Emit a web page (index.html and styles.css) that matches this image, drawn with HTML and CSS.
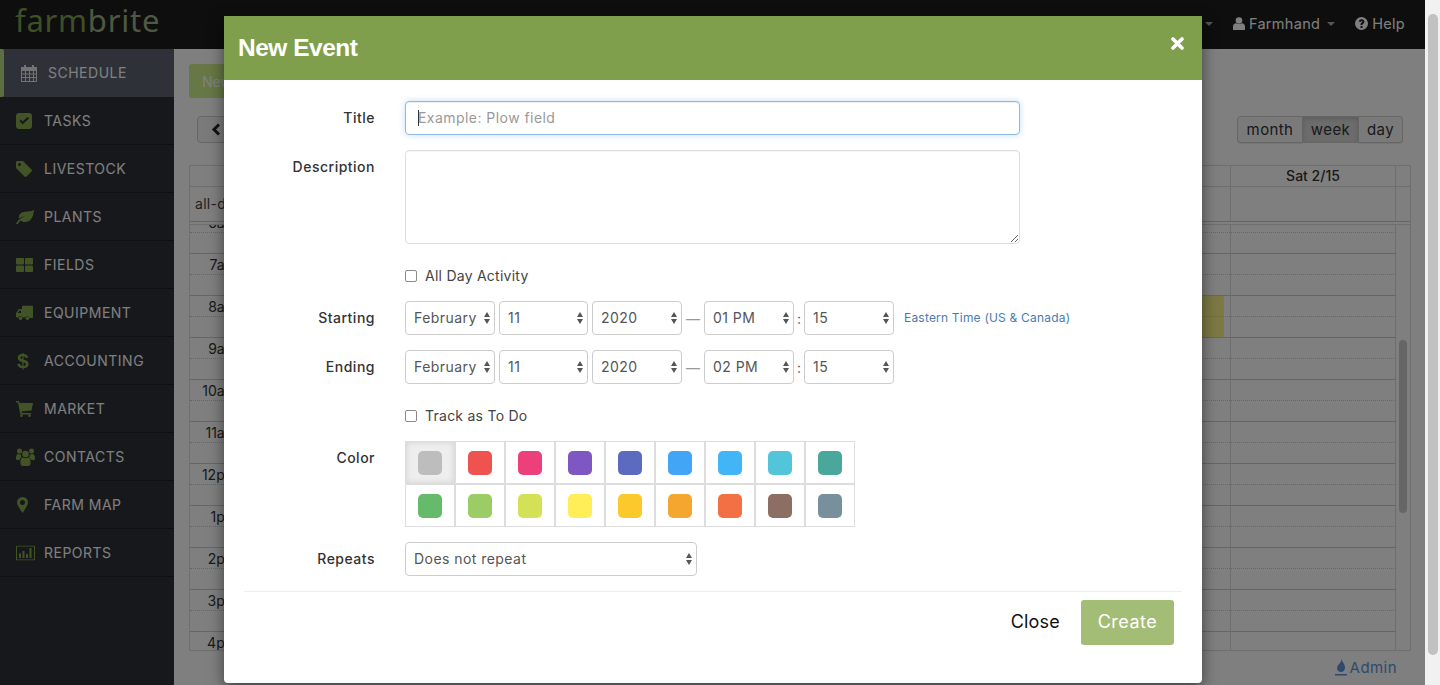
FILE: index.html
```html
<!DOCTYPE html>
<html lang="en">
<head>
<meta charset="utf-8">
<title>New Event - Farmbrite</title>
<link rel="stylesheet" href="styles.css">
</head>
<body>
<div class="app">
  <div class="page">
    <header class="topbar">
      <div class="logo"><span class="logo-a">farm</span><span class="logo-b">brite</span></div>
      <nav class="topnav">
        <span class="caret caret-lone"></span>
        <a class="topitem"><svg class="ti" width="12" height="13" viewBox="0 0 12 13"><circle cx="6" cy="3.5" r="3.3"/><path d="M0 13V9.5C0 7.6 1.4 6.4 3 6.2 4 7.2 8 7.2 9 6.2 10.6 6.4 12 7.6 12 9.5V13Z"/></svg>Farmhand<span class="caret"></span></a>
        <a class="topitem"><svg class="ti" width="13" height="13" viewBox="0 0 13 13"><path fill-rule="evenodd" d="M6.500 0a6.500 6.500 0 1 0 0 13 6.500 6.500 0 0 0 0-13ZM5.500 9h2v2h-2ZM3.800 4.600C4 3.200 5.100 2.300 6.600 2.300c1.600 0 2.800 1 2.800 2.400 0 1.100-.7 1.600-1.300 2-.4.300-.6.500-.6.900v.3h-2v-.5c0-1 .6-1.500 1.100-1.900.4-.3.700-.5.700-.8 0-.4-.3-.7-.7-.7-.5 0-.8.300-.9.900Z"/></svg>Help</a>
      </nav>
    </header>
    <div class="body-row">
      <aside class="sidebar">
        <a class="nav-item active"><svg class="nicon cal-icon" width="18" height="18" viewBox="0 0 18 18"><path fill-rule="evenodd" d="M1 3h3V1h2v2h6V1h2v2h3v15H1ZM2 7v2.500h3V7Zm4 0v2.500h3V7Zm4 0v2.500h3V7Zm4 0v2.500h2V7ZM2 10.500V13h3v-2.500Zm4 0V13h3v-2.500Zm4 0V13h3v-2.500Zm4 0V13h2v-2.500ZM2 14v3h3v-3Zm4 0v3h3v-3Zm4 0v3h3v-3Zm4 0v3h2v-3Z"/></svg>SCHEDULE</a>
        <a class="nav-item"><svg class="nicon" width="16" height="16" viewBox="0 0 16 16"><path fill-rule="evenodd" d="M3 0h10a3 3 0 0 1 3 3v10a3 3 0 0 1-3 3H3a3 3 0 0 1-3-3V3a3 3 0 0 1 3-3Zm.5 8L6.500 11.500 13 5.500 11.500 4 6.500 8.600 5 6.500Z"/></svg>TASKS</a>
        <a class="nav-item"><svg class="nicon" width="16" height="16" viewBox="0 0 16 16"><path fill-rule="evenodd" d="M0 1.500C0 .6.600 0 1.500 0H7l8.500 8.500c.6.600.6 1.400 0 2L10.500 15.500c-.6.600-1.400.6-2 0L0 7ZM3.500 2a1.500 1.500 0 1 0 0 3 1.500 1.500 0 0 0 0-3Z"/></svg>LIVESTOCK</a>
        <a class="nav-item"><svg class="nicon" width="18" height="15" viewBox="0 0 18 15"><path d="M18 0C17.500 6 16 12 9.500 12.500 7.500 12.700 5.500 12 4.500 11 3.500 12 2.500 13.500 1.500 15L0 14.200C1.500 11.500 4 8.500 9.500 6.500 6.500 7 4 8.200 3 9 2 5 5.500 2.500 9 2.300 13 2 16.500 2 18 0Z"/></svg>PLANTS</a>
        <a class="nav-item"><svg class="nicon" width="17" height="14" viewBox="0 0 17 14"><rect width="8" height="6.500" rx="1"/><rect x="9" width="8" height="6.500" rx="1"/><rect y="7.500" width="8" height="6.500" rx="1"/><rect x="9" y="7.500" width="8" height="6.500" rx="1"/></svg>FIELDS</a>
        <a class="nav-item"><svg class="nicon" width="17" height="15" viewBox="0 0 17 15"><path fill-rule="evenodd" d="M7 0h9a1 1 0 0 1 1 1v10.500a1 1 0 0 1-1 1h-2.200a2.500 2.500 0 0 0-4.600-.5H6.800a2.500 2.500 0 0 0-4.600 0H1a1 1 0 0 1-1-1V7.500L3 3.500h3V1a1 1 0 0 1 1-1ZM3.700 5 1.500 7.500H5V5Z"/><circle cx="4.500" cy="12.800" r="1.800"/><circle cx="11.500" cy="12.800" r="1.800"/></svg>EQUIPMENT</a>
        <a class="nav-item"><span class="nicon dollar">$</span>ACCOUNTING</a>
        <a class="nav-item"><svg class="nicon" width="17" height="16" viewBox="0 0 17 16"><path d="M0 0h3l.5 2H17l-1.500 7.500-10 1 .3 1.500H15v1.500H4.300L2 1.500H0Z"/><circle cx="5.500" cy="14.700" r="1.300"/><circle cx="13.500" cy="14.700" r="1.300"/></svg>MARKET</a>
        <a class="nav-item"><svg class="nicon" width="19" height="18" viewBox="0 0 19 18"><circle cx="9.500" cy="6" r="3.300"/><circle cx="3.500" cy="3" r="2.500"/><circle cx="15.500" cy="3" r="2.500"/><path d="M0 10c0-2.500 1-4 2.500-4.200.5.500 1.500 1 2.500.8-.3 1-.1 2 .5 2.800-1 .5-1.800 1.400-2.200 2.600H1C.4 12 0 11.200 0 10ZM19 10c0 1.200-.4 2-1 2h-2.800c-.4-1.200-1.200-2.100-2.200-2.600.6-.8.800-1.800.5-2.800 1 .2 2-.3 2.500-.8C18 6 19 7.500 19 10ZM4.500 15.500V13c0-2 1.200-3.300 2.700-3.500 1.200 1 3.400 1 4.600 0 1.500.2 2.700 1.500 2.700 3.500v2.500c0 1.500-1 2.500-2.500 2.500H7c-1.500 0-2.500-1-2.500-2.500Z"/></svg>CONTACTS</a>
        <a class="nav-item"><svg class="nicon marker" width="11" height="16" viewBox="0 0 11 16"><path fill-rule="evenodd" d="M5.500 0A5.500 5.500 0 0 1 11 5.500C11 8 7.500 13 5.500 16 3.500 13 0 8 0 5.500A5.500 5.500 0 0 1 5.500 0Zm0 3a2.500 2.500 0 1 0 0 5 2.500 2.500 0 0 0 0-5Z"/></svg>FARM MAP</a>
        <a class="nav-item"><svg class="nicon" width="19" height="15" viewBox="0 0 19 15"><path fill-rule="evenodd" d="M1 0h17a1 1 0 0 1 1 1v13a1 1 0 0 1-1 1H1a1 1 0 0 1-1-1V1a1 1 0 0 1 1-1Zm0 1v13h17V1ZM3 8h2v4.500H3Zm3.500-2.500h2v7h-2Zm3.500 3h2v4h-2Zm3.500-6h2v10h-2Z"/></svg>REPORTS</a>
      </aside>
      <main class="content">
        <button class="new-btn">New Event</button>
        <div class="toolbar">
          <button class="prev-btn"><svg width="10" height="13" viewBox="0 0 10 13"><path d="M8 1.500 3 6.500l5 5" fill="none" stroke="#222" stroke-width="3"/></svg></button>
          <div class="views"><button class="view v-month">month</button><button class="view v-week on">week</button><button class="view v-day">day</button></div>
        </div>
        <section class="cal">
          <div class="cal-row cal-head"><div class="cal-cell"></div><div class="cal-cell sat">Sat 2/15</div><div class="cal-gut"></div></div>
          <div class="cal-row cal-allday"><div class="cal-cell allday-label">all-day</div><div class="cal-cell"></div><div class="cal-gut"></div></div>
          <div class="cal-body">
            <div class="slots">
              <div class="slot"><div class="slot-main"><span class="hour">6am</span></div><div class="slot-sat"></div></div>
              <div class="slot"><div class="slot-main"><span class="hour">7am</span></div><div class="slot-sat"></div></div>
              <div class="slot"><div class="slot-main"><span class="hour">8am</span><div class="event"></div></div><div class="slot-sat"></div></div>
              <div class="slot"><div class="slot-main"><span class="hour">9am</span></div><div class="slot-sat"></div></div>
              <div class="slot"><div class="slot-main"><span class="hour">10am</span></div><div class="slot-sat"></div></div>
              <div class="slot"><div class="slot-main"><span class="hour">11am</span></div><div class="slot-sat"></div></div>
              <div class="slot"><div class="slot-main"><span class="hour">12pm</span></div><div class="slot-sat"></div></div>
              <div class="slot"><div class="slot-main"><span class="hour">1pm</span></div><div class="slot-sat"></div></div>
              <div class="slot"><div class="slot-main"><span class="hour">2pm</span></div><div class="slot-sat"></div></div>
              <div class="slot"><div class="slot-main"><span class="hour">3pm</span></div><div class="slot-sat"></div></div>
              <div class="slot"><div class="slot-main"><span class="hour">4pm</span></div><div class="slot-sat"></div></div>
            </div>
            <div class="cal-scroll"><div class="cal-thumb"></div></div>
          </div>
        </section>
        <div class="admin-row"><a class="admin"><svg width="12" height="17" viewBox="0 0 12 17"><path d="M6.500 0C7 3 10 5 10 8.500 10 11.500 8 13 6 13S2 11.500 2 9c0-2 1.500-3 2.500-4.500C5.500 3 6.500 2 6.500 0Z"/><rect y="15" width="12" height="1.500"/></svg>Admin</a></div>
      </main>
    </div>
    <div class="overlay">
      <div class="modal">
        <div class="modal-head">
          <h2 class="modal-title">New Event</h2>
          <button class="modal-x" aria-label="Close"><svg width="13" height="13" viewBox="0 0 13 13"><path d="M2 2l9 9M11 2l-9 9" stroke="#fff" stroke-width="3.600" stroke-linecap="round"/></svg></button>
        </div>
        <form class="modal-body">
          <div class="row"><label class="lbl">Title</label><span class="title-wrap"><input class="field title" type="text" placeholder="Example: Plow field"></span></div>
          <div class="row"><label class="lbl lbl-top">Description</label><textarea class="field desc"></textarea></div>
          <div class="row row-check"><span></span><label class="check"><input type="checkbox">All Day Activity</label></div>
          <div class="row"><label class="lbl">Starting</label>
            <div class="dt">
              <span class="sel s90"><select><option>February</option></select></span>
              <span class="sel s89 ml4"><select><option>11</option></select></span>
              <span class="sel s90 ml4"><select><option>2020</option></select></span>
              <span class="dash">—</span>
              <span class="sel s90"><select><option>01 PM</option></select></span>
              <span class="colon">:</span>
              <span class="sel s90"><select><option>15</option></select></span>
              <a class="tz">Eastern Time (US &amp; Canada)</a>
            </div>
          </div>
          <div class="row"><label class="lbl">Ending</label>
            <div class="dt">
              <span class="sel s90"><select><option>February</option></select></span>
              <span class="sel s89 ml4"><select><option>11</option></select></span>
              <span class="sel s90 ml4"><select><option>2020</option></select></span>
              <span class="dash">—</span>
              <span class="sel s90"><select><option>02 PM</option></select></span>
              <span class="colon">:</span>
              <span class="sel s90"><select><option>15</option></select></span>
            </div>
          </div>
          <div class="row row-check"><span></span><label class="check"><input type="checkbox">Track as To Do</label></div>
          <div class="row"><label class="lbl lbl-color">Color</label>
            <div class="colors">
              <div class="cc sel-c"><i class="sw c1"></i></div><div class="cc"><i class="sw c2"></i></div><div class="cc"><i class="sw c3"></i></div><div class="cc"><i class="sw c4"></i></div><div class="cc"><i class="sw c5"></i></div><div class="cc"><i class="sw c6"></i></div><div class="cc"><i class="sw c7"></i></div><div class="cc"><i class="sw c8"></i></div><div class="cc"><i class="sw c9"></i></div>
              <div class="cc"><i class="sw c10"></i></div><div class="cc"><i class="sw c11"></i></div><div class="cc"><i class="sw c12"></i></div><div class="cc"><i class="sw c13"></i></div><div class="cc"><i class="sw c14"></i></div><div class="cc"><i class="sw c15"></i></div><div class="cc"><i class="sw c16"></i></div><div class="cc"><i class="sw c17"></i></div><div class="cc"><i class="sw c18"></i></div>
            </div>
          </div>
          <div class="row"><label class="lbl">Repeats</label><span class="sel s292"><select><option>Does not repeat</option></select></span></div>
        </form>
        <div class="modal-foot">
          <button class="btn-close">Close</button>
          <button class="btn-create">Create</button>
        </div>
      </div>
    </div>
  </div>
  <div class="page-scroll"><div class="page-thumb"></div></div>
</div>
</body>
</html>
```
FILE: styles.css
```css
* { box-sizing: border-box; }
html, body { margin: 0; height: 100%; overflow: hidden; }
body { font-family: Inter, "Liberation Sans", sans-serif; font-size: 14px; color: #333; background: #fff; }
button, input, select, textarea { font-family: inherit; }

.app { display: flex; width: 1440px; height: 685px; overflow: hidden; }
.page { position: relative; width: 1425px; height: 685px; display: flex; flex-direction: column; overflow: hidden; }
.page-scroll { width: 15px; background: #f1f1f1; padding: 14px 2px 0 3px; }
.page-thumb { height: 641px; background: #c1c1c1; border-radius: 5px; }

.topbar { height: 49px; background: #1c1c1c; display: flex; justify-content: space-between; align-items: flex-start; padding: 0 20px 0 15px; flex: none; }
.logo { font-family: "Noto Sans", sans-serif; font-size: 31px; line-height: 40px; letter-spacing: .75px; }
.logo-a { color: #7f9f4d; }
.logo-b { color: #9db087; }
.topnav { display: flex; align-items: center; color: #fff; font-size: 14.500px; letter-spacing: .3px; height: 47px; }
.topitem { display: flex; align-items: center; margin-left: 20px; }
.ti { fill: #fff; margin-right: 4px; }
.caret { width: 0; height: 0; border-left: 4px solid transparent; border-right: 4px solid transparent; border-top: 4px solid #aaa; margin-left: 7px; }
.caret-lone { margin: 0; }

.body-row { flex: 1; display: flex; min-height: 0; }
.sidebar { width: 174px; background: #2e3038; flex: none; }
.nav-item { height: 48px; display: flex; align-items: center; color: #fff; font-size: 14px; letter-spacing: .5px; padding-left: 44px; position: relative; border-bottom: 1px solid #1e2024; }
.nav-item.active { background: #5c6270; padding: 0 0 1px 48px; border-bottom: 0; }
.nav-item.active::before { content: ""; position: absolute; left: 0; top: 0; bottom: 0; width: 4px; background: #bade80; border-radius: 0 2px 2px 0; }
.nicon { position: absolute; left: 16px; top: 50%; transform: translateY(-50%); fill: #85a84c; }
.cal-icon { left: 20px; fill: #e6e6e6; }
.marker { left: 17px; }
.dollar { color: #85a84c; font: bold 21px "Liberation Sans", sans-serif; letter-spacing: 0; left: 17px; }

.content { flex: 1; background: #fff; padding: 15px 14px 0 15px; display: flex; flex-direction: column; min-width: 0; }
.new-btn { align-self: flex-start; height: 34px; width: 110px; border: 0; border-radius: 3px; background: #ccf08a; color: #fff; font-size: 14px; text-align: left; padding-left: 13px; }
.toolbar { display: flex; justify-content: space-between; margin-top: 18px; padding: 0 8px; height: 27px; }
.prev-btn { width: 48px; height: 27px; background: #f5f5f5; border: 1px solid #ccc; border-radius: 4px; padding: 2px 0 0 13px; text-align: left; }
.views { display: flex; margin-right: 0; }
.view { height: 27px; background: #f5f5f5; border: 1px solid #ccc; border-left: 0; color: #333; font-size: 15px; padding: 0 0 1px; box-shadow: 0 1px 1px rgba(0,0,0,.1); letter-spacing: .4px; }
.v-month { width: 66px; border-left: 1px solid #ccc; border-radius: 4px 0 0 4px; }
.v-week { width: 56px; }
.v-day { width: 44px; border-radius: 0 4px 4px 0; }
.view.on { background: #d8d8d8; box-shadow: inset 0 2px 4px rgba(0,0,0,.15); }

.cal { margin-top: 22px; width: 1222px; height: 486px; border: 1px solid #ddd; display: flex; flex-direction: column; }
.cal-row { display: grid; grid-template-columns: 1041px 165px 14px; flex: none; }
.cal-head { height: 21px; border-bottom: 1px solid #ddd; }
.cal-allday { height: 35px; border-bottom: 1px solid #ccc; }
.cal-cell { border-right: 1px solid #ddd; }
.sat { text-align: center; font-weight: 500; line-height: 20px; font-size: 14px; }
.allday-label { padding: 8px 0 0 5px; color: #444; letter-spacing: .3px; }
.cal-body { flex: 1; min-height: 0; display: flex; margin-top: 2px; border-top: 1px solid #ddd; overflow: hidden; }
.slots { width: 1206px; overflow: hidden; flex: none; }
.slot { height: 42px; display: grid; grid-template-columns: 1041px 165px; position: relative; border-bottom: 1px solid #ccc; }
.slot:first-child { margin-top: -13px; }
.slot::after { content: ""; position: absolute; left: 0; right: 0; top: 20px; border-top: 1px dotted #ccc; }
.slot-main { border-right: 1px solid #ddd; position: relative; padding-top: 1px; }
.slot-sat { border-right: 1px solid #ddd; }
.hour { display: block; width: 50px; text-align: right; color: #333; line-height: 20px; padding-right: 3px; }
.event { position: absolute; right: 6px; top: 0; bottom: 0; width: 60px; background: #f8f28a; border-radius: 2px; }
.cal-scroll { width: 14px; padding: 115px 2px 0 3px; flex: none; }
.cal-thumb { width: 8px; height: 173px; background: #cdcdcd; border-radius: 4px; }
.admin-row { display: flex; justify-content: flex-end; padding: 7px 14px 0 0; }
.admin { color: #5e94da; display: flex; align-items: center; font-size: 15px; letter-spacing: .45px; }
.admin svg { fill: #5e94da; margin-right: 3px; }

.overlay { position: absolute; inset: 0; z-index: 10; background: rgba(0,0,0,.5); padding: 16px 0 0 224px; }
.modal { width: 978px; height: 667px; background: #fff; border-radius: 0 0 4px 4px; box-shadow: 0 5px 15px rgba(0,0,0,.5); display: flex; flex-direction: column; }
.modal-head { height: 64px; background: #7f9f4d; display: flex; align-items: center; justify-content: space-between; padding: 0 18px 0 14px; flex: none; }
.modal-title { margin: 0; color: #fff; font: bold 24.500px "Liberation Sans", sans-serif; letter-spacing: -.5px; }
.modal-x { background: none; border: 0; padding: 0; height: 13px; margin-top: -10px; line-height: 0; }
.modal-body { padding: 21px 20px 0; display: flex; flex-direction: column; gap: 15px; }
.row { display: grid; grid-template-columns: 131px 1fr; column-gap: 30px; align-items: center; }
.lbl { text-align: right; font-weight: 500; color: #333; font-size: 14px; letter-spacing: .5px; padding-bottom: 2px; }
.lbl-top { align-self: start; padding: 8px 0 0; }
.lbl-color { align-self: start; padding: 8px 0 0; }
.title-wrap { position: relative; display: block; height: 34px; }
.title-wrap::after { content: ""; position: absolute; left: 13px; top: 9px; width: 1px; height: 16px; background: #333; }
.field { width: 615px; border: 1px solid #ddd; border-radius: 4px; padding: 6px 12px; font-size: 14px; color: #555; background: #fff; display: block; box-shadow: inset 0 1px 1px rgba(0,0,0,.03); letter-spacing: .45px; outline: none; }
.title { height: 34px; padding-bottom: 8px; border-color: #8fbbe0; box-shadow: inset 0 1px 1px rgba(0,0,0,.075), 0 0 6px rgba(102,175,233,.4); }
.title::placeholder { color: #999; }
.desc { height: 94px; resize: vertical; }
.row-check { height: 27px; padding-top: 6px; }
.check { display: flex; align-items: center; color: #444; letter-spacing: .25px; line-height: 19px; }
.check input { appearance: none; width: 12px; height: 12px; border: 1px solid #8a8a8a; border-radius: 2px; margin: 0 8px 0 0; background: #fff; }
.dt { display: flex; align-items: center; }
.sel { display: block; position: relative; height: 34px; flex: none; }
.sel select { appearance: none; width: 100%; height: 34px; background: #fff; border: 1px solid #ccc; border-radius: 4px; padding: 0 8px 2px; font-size: 14px; color: #555; letter-spacing: .45px; }
.sel::before, .sel::after { content: ""; position: absolute; right: 5px; border-left: 3.500px solid transparent; border-right: 3.500px solid transparent; pointer-events: none; }
.sel::before { top: 11px; border-bottom: 5px solid #555; }
.sel::after { top: 18px; border-top: 5px solid #555; }
.s90 { width: 90px; }
.s89 { width: 89px; }
.s292 { width: 292px; }
.ml4 { margin-left: 4px; }
.dash { width: 22px; text-align: center; color: #999; }
.colon { width: 10px; text-align: center; color: #555; }
.tz { margin-left: 10px; color: #4a7bb0; font-size: 12px; letter-spacing: .2px; padding-bottom: 2px; }
.colors { display: grid; grid-template-columns: repeat(9, 50px); grid-auto-rows: 43px; width: 450px; }
.cc { border: 1px solid #ddd; display: flex; align-items: center; justify-content: center; }
.sel-c { background: #eee; box-shadow: inset 0 0 6px rgba(0,0,0,.12); }
.sw { display: block; width: 24px; height: 24px; border-radius: 5px; }
.c1 { background: #bdbdbd; } .c2 { background: #ef5350; } .c3 { background: #ec407a; }
.c4 { background: #7e57c2; } .c5 { background: #5c6bc0; } .c6 { background: #42a5f5; }
.c7 { background: #42b5f7; } .c8 { background: #53c5da; } .c9 { background: #4aa79b; }
.c10 { background: #66bb6a; } .c11 { background: #9ccc65; } .c12 { background: #d4e157; }
.c13 { background: #ffee58; } .c14 { background: #fbc92c; } .c15 { background: #f5a62f; }
.c16 { background: #f27043; } .c17 { background: #8d6e63; } .c18 { background: #78909c; }
.modal-foot { margin: 15px 20px 0; border-top: 1px solid #eee; padding: 8px 8px 0; display: flex; justify-content: flex-end; align-items: center; }
.btn-close { background: none; border: 0; padding: 0 0 2px; margin-right: 21px; color: #111; font-size: 18px; letter-spacing: .2px; }
.btn-create { width: 93px; height: 45px; background: #a3bd77; border: 0; border-radius: 3px; color: #fff; font-size: 18px; letter-spacing: .5px; padding: 0 0 2px; }
```
